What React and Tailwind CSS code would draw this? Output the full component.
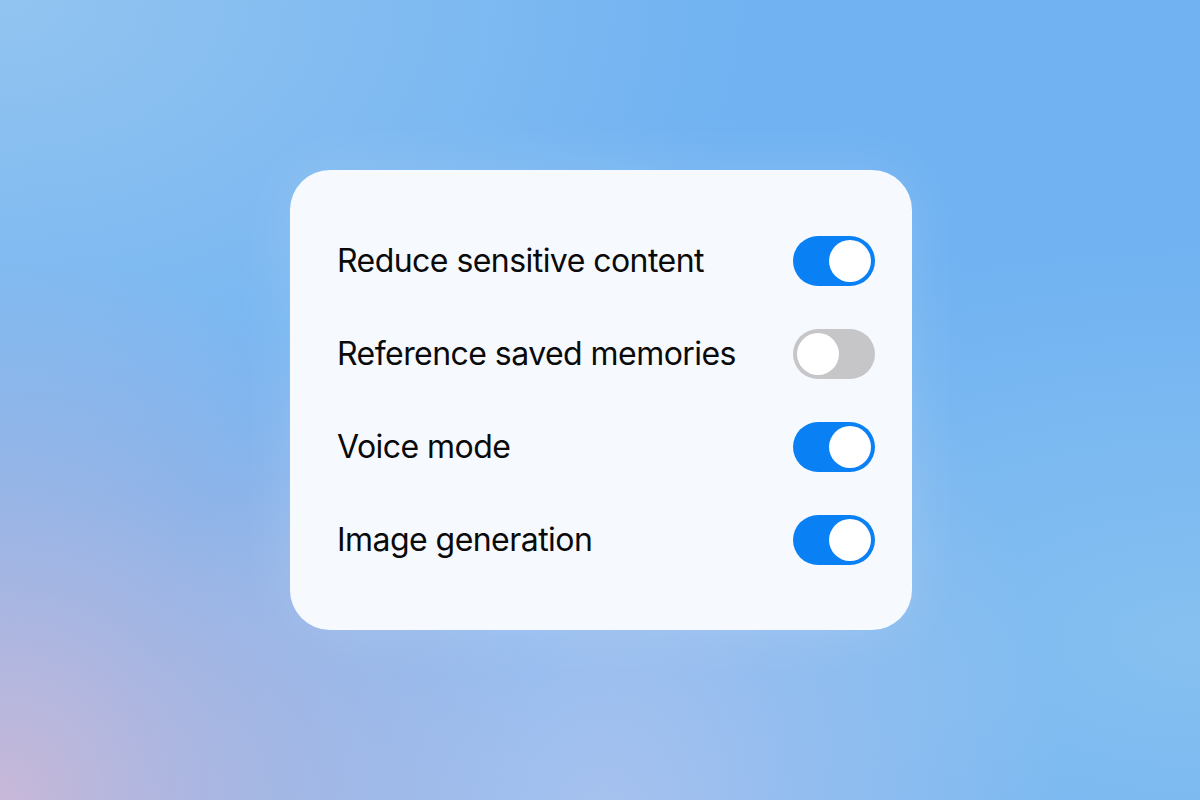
import React from "react";

const settings = [
  { label: "Reduce sensitive content", on: true },
  { label: "Reference saved memories", on: false },
  { label: "Voice mode", on: true },
  { label: "Image generation", on: true },
];

function Toggle({ on }) {
  return (
    <div
      className={`flex h-[50px] w-[82px] items-center rounded-full p-[4px] ${
        on ? "justify-end bg-[#0a80f5]" : "justify-start bg-[#c6c6c8]"
      }`}
    >
      <div className="h-[42px] w-[42px] rounded-full bg-white" />
    </div>
  );
}

export default function App() {
  return (
    <div className="flex h-[800px] w-[1200px] items-center justify-center bg-[#70b2f2] bg-[radial-gradient(circle_at_0%_100%,#c8b8d8_0%,rgba(200,184,216,0)_38%),radial-gradient(ellipse_at_0%_0%,#92c4f0_0%,rgba(146,196,240,0)_45%),radial-gradient(ellipse_at_50%_105%,#a9c2ee_0%,rgba(169,194,238,0)_55%),radial-gradient(ellipse_at_100%_80%,#86c0f0_0%,rgba(134,192,240,0)_45%)] font-['Inter','Liberation_Sans',sans-serif]">
      <div className="ml-[2px] flex h-[460px] w-[622px] flex-col gap-[43px] rounded-[40px] bg-[#f6f9fe] pb-[65px] pl-[47px] pr-[37px] pt-[66px] shadow-[0_0_60px_rgba(255,255,255,0.15)]">
        {settings.map((s) => (
          <div key={s.label} className="flex h-[50px] items-center justify-between">
            <span className="text-[32px] leading-none tracking-[-0.55px] text-[#0a0a0a]">
              {s.label}
            </span>
            <Toggle on={s.on} />
          </div>
        ))}
      </div>
    </div>
  );
}
